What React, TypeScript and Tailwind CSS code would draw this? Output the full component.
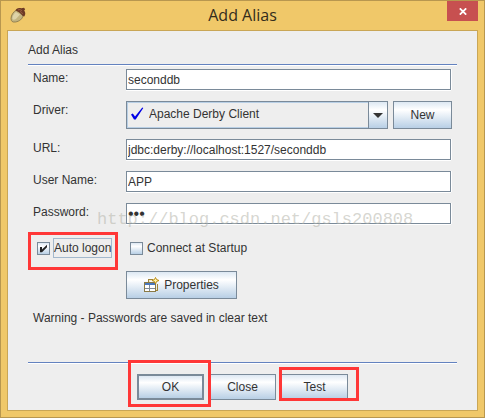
import type { ComponentProps, ReactNode } from "react";
import clsx from "clsx";

const textField =
  "block h-[21px] w-full border border-[#7a8a99] bg-white px-px text-[#333333] shadow-[0_1px_0_#ffffff,1px_0_0_#ffffff] outline-none";

function Row({
  label,
  htmlFor,
  children,
}: {
  label: string;
  htmlFor: string;
  children: ReactNode;
}) {
  return (
    <div className="flex items-start">
      <label htmlFor={htmlFor} className="w-[93px] shrink-0">
        {label}
      </label>
      <div className="min-w-0 flex-1">{children}</div>
    </div>
  );
}

function MetalButton({ className, ...props }: ComponentProps<"button">) {
  return (
    <button
      type="button"
      className={clsx(
        "flex items-center justify-center border-[#7a8a99] bg-linear-to-b from-[#dde8f3] via-white via-30% to-[#b8cfe5]",
        className
      )}
      {...props}
    />
  );
}

function Separator() {
  return <div className="h-[2px] border-t border-[#6382bf] bg-white" />;
}

function CheckOption({
  id,
  label,
  checked = false,
  focused = false,
}: {
  id: string;
  label: string;
  checked?: boolean;
  focused?: boolean;
}) {
  return (
    <div className="flex items-center gap-[3px] pl-1">
      <span className="relative block size-[13px]">
        <input
          id={id}
          type="checkbox"
          defaultChecked={checked}
          className="peer block size-[13px] appearance-none border border-[#7a8a99] bg-linear-to-b from-[#dde8f3] via-white via-30% to-[#b8cfe5]"
        />
        <svg
          viewBox="0 0 13 13"
          className="pointer-events-none absolute inset-0 hidden peer-checked:block"
          aria-hidden="true"
        >
          <path d="M3 5h2v2.600L10 2.800v2.500L5 10.200H3z" fill="#222222" />
        </svg>
      </span>
      <label
        htmlFor={id}
        className={clsx(
          "border leading-[18px] whitespace-nowrap",
          focused ? "border-[#a3b8cc]" : "border-transparent"
        )}
      >
        {label}
      </label>
    </div>
  );
}

function Highlight({ className }: { className: string }) {
  return (
    <span
      className={clsx(
        "pointer-events-none absolute z-10 border-3 border-[#ff3737]",
        className
      )}
    />
  );
}

function AcornIcon() {
  return (
    <svg viewBox="0 0 16 16" className="size-4" aria-hidden="true">
      <path
        d="M6.500 3C3.500 4.500 1 8 1 11.500c0 2.800 1.600 4 4.500 3.500C9.500 14.300 12.500 12 13 8.500z"
        fill="#c3b47f"
        stroke="#796a42"
        strokeWidth=".7"
      />
      <path d="M6 5C4 6.500 2.200 9 2.400 12c1.200 1.200 3.200.6 4.400-1L10 7.500z" fill="#ded3a8" />
      <path
        d="M5.500 3.500C6 1.200 8.800.4 11.300 1.300L14 .8l1.200 1.400-1 1.300c1.400 1.700 1.500 4.300 0 6-1.500-.3-2.200-1.300-3.200-2.500C9.500 5.200 7.800 4.500 5.500 3.500z"
        fill="#6d3a25"
      />
      <path d="M8 3c1.500-.8 3-.4 4 1M10 4.500c1.300.3 2.200 1.300 2.500 2.500" fill="none" stroke="#a36a4a" strokeWidth=".8" />
    </svg>
  );
}

function PropertiesIcon() {
  return (
    <svg viewBox="0 0 16 16" className="size-4" shapeRendering="crispEdges" aria-hidden="true">
      <path d="M4.500 6V2.500H9M13.500 7v6.500H12" fill="#f3e9c4" stroke="#a08436" />
      <path d="M.5 5.500h11v9H.5z" fill="#ffffff" stroke="#8a7a45" />
      <path d="M1 6h10v2H1z" fill="#4a78bd" />
      <path d="M1 11.500h10M5.500 8v6" stroke="#7f8a96" />
      <path
        d="M11.500.5l1 2L15 3.500l-2.500 1-1 2.500-1-2.500L8 3.500l2.500-1z"
        fill="#fff3a8"
        stroke="#b98a12"
        shapeRendering="auto"
      />
    </svg>
  );
}

export default function App() {
  return (
    <div className="w-full border border-[#b8974f] bg-[#f0c869] px-[6px] pb-[6px] font-['Liberation_Sans',Arial,sans-serif] text-[12px] leading-[18px] text-[#333333]">
      <header className="grid h-[29px] grid-cols-[31px_1fr_31px]">
        <div className="pt-[6px] pl-[3px]">
          <AcornIcon />
        </div>
        <h1 className="text-center font-['Open_Sans','Noto_Sans',sans-serif] text-[16px] leading-[29px] text-[#332c1c]">
          Add Alias
        </h1>
        <button
          type="button"
          aria-label="Close window"
          className="flex h-5 items-center justify-center bg-[#c75050]"
        >
          <svg viewBox="0 0 8 7" className="h-[7px] w-2" aria-hidden="true">
            <path d="M.8.3l6.400 6.400M7.200.3L.8 6.700" stroke="#ffffff" strokeWidth="1.700" />
          </svg>
        </button>
      </header>

      <main className="border border-[#c9a656] bg-[#eeeeee] px-5 py-[10px]">
        <h2 className="mb-[5px]">Add Alias</h2>
        <Separator />

        <form className="flex flex-col gap-[10px] px-[5px] pt-[3px] pb-[35px]">
          <Row label="Name:" htmlFor="name">
            <div className="pr-px pb-px">
              <input id="name" defaultValue="seconddb" className={textField} />
            </div>
          </Row>

          <Row label="Driver:" htmlFor="driver">
            <div className="flex gap-[5px]">
              <div className="relative min-w-0 flex-1">
                <select
                  id="driver"
                  className="block h-7 w-full appearance-none border border-[#7a8a99] bg-[#eeeeee] pr-6 pb-[2px] pl-[22px] shadow-[inset_0_0_0_1px_#b8cfe5] outline-none"
                >
                  <option>Apache Derby Client</option>
                </select>
                <svg
                  viewBox="0 0 13 13"
                  className="pointer-events-none absolute top-[6px] left-[5px] size-[13px]"
                  aria-hidden="true"
                >
                  <path d="M0 7.500l1.800-1 2.200 3L11.300.6l1 .3L4.700 12.500H3z" fill="#0000e6" />
                </svg>
                <span className="pointer-events-none absolute inset-y-0 right-0 flex w-5 items-center justify-center border border-[#7a8a99] bg-linear-to-b from-[#dde8f3] via-white via-30% to-[#b8cfe5]">
                  <svg viewBox="0 0 10 5" className="h-[5px] w-[10px]" aria-hidden="true">
                    <path d="M0 0h10L5 5z" fill="#333333" />
                  </svg>
                </span>
              </div>
              <MetalButton className="h-7 w-[59px] border">New</MetalButton>
            </div>
          </Row>

          <Row label="URL:" htmlFor="url">
            <div className="pr-px pb-px">
              <input
                id="url"
                defaultValue="jdbc:derby://localhost:1527/seconddb"
                className={textField}
              />
            </div>
          </Row>

          <Row label="User Name:" htmlFor="user">
            <div className="pr-px pb-px">
              <input id="user" defaultValue="APP" className={textField} />
            </div>
          </Row>

          <Row label="Password:" htmlFor="password">
            <div className="relative pr-px pb-px">
              <input
                id="password"
                type="password"
                defaultValue="abc"
                className={clsx(textField, "text-[16px]")}
              />
              <span className="pointer-events-none absolute top-[7px] -left-[29px] font-['Liberation_Mono',monospace] text-[17px] leading-5 whitespace-nowrap text-[#b4b4aa]/55">
                http://blog.csdn.net/gsls200808
              </span>
            </div>
          </Row>

          <div className="flex h-[26px] items-center">
            <div className="relative w-[93px]">
              <CheckOption id="auto-logon" label="Auto logon" checked focused />
              <Highlight className="-top-[6px] -left-[5px] h-[38px] w-[90px]" />
            </div>
            <CheckOption id="connect-startup" label="Connect at Startup" />
          </div>

          <div className="pl-[93px]">
            <MetalButton className="h-7 w-[111px] gap-1 border">
              <PropertiesIcon />
              Properties
            </MetalButton>
          </div>

          <p>Warning - Passwords are saved in clear text</p>
        </form>

        <Separator />
        <footer className="flex justify-center gap-[5px] pt-[10px]">
          <div className="relative">
            <MetalButton className="h-[26px] w-[67px] border-2">OK</MetalButton>
            <Highlight className="-top-[14px] -left-[9px] h-[47px] w-[83px]" />
          </div>
          <MetalButton className="h-[26px] w-[67px] border">Close</MetalButton>
          <div className="relative">
            <MetalButton className="h-[26px] w-[67px] border">Test</MetalButton>
            <Highlight className="-top-[7px] -left-[2px] h-[34px] w-20" />
          </div>
        </footer>
      </main>
    </div>
  );
}
